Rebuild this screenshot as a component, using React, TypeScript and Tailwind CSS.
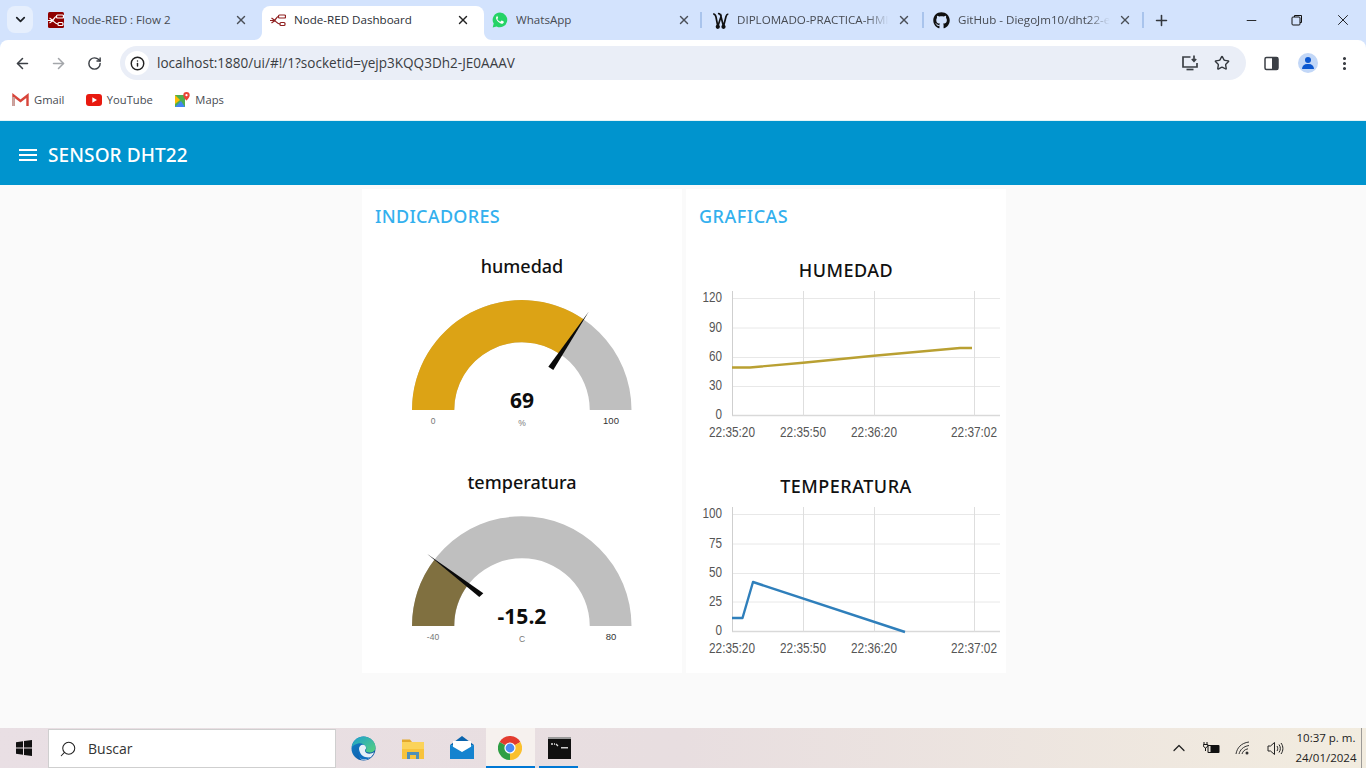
import { ArrowLeft, ArrowRight, RotateCw, X, Plus, Minus, Star, ChevronDown, ChevronUp, Search, EllipsisVertical, Info } from "lucide-react";
import { FaGithub } from "react-icons/fa";

function NodeRedGlyph({ color }: { color: string }) {
  return (
    <g fill="none" stroke={color} strokeWidth="1.200">
      <path d="M0 8.500h3.500M1.500 6l3.500 2.500L1.500 11M3.500 8.500c3 0 2.500-4 5-4M3.500 8.500c3 0 3 3.500 6.500 3.500" />
      <rect x="8.500" y="3" width="7" height="3" rx="1" />
      <rect x="10" y="10.500" width="5" height="3" rx="1" />
    </g>
  );
}

function NodeRedIcon({ boxed }: { boxed?: boolean }) {
  return (
    <svg width="16" height="16" viewBox="0 0 16 16" className="shrink-0">
      {boxed && <rect width="16" height="16" rx="1.500" fill="#8f0000" />}
      <NodeRedGlyph color={boxed ? "#ffffff" : "#8f2020"} />
    </svg>
  );
}

function WhatsIcon() {
  return (
    <svg width="16" height="16" viewBox="0 0 16 16" className="shrink-0">
      <path d="M8 .6a7.300 7.300 0 0 0-6.300 11L.7 15.400l3.900-1A7.300 7.300 0 1 0 8 .6z" fill="#25d366" />
      <path d="M5.600 3.900c-.3 0-.8.2-1.100.7-.9 1.300-.3 3 .9 4.500 1.300 1.500 3 2.600 4.500 2.600.9 0 1.800-.7 1.900-1.500.1-.5 0-.7-.2-.8l-1.700-.8c-.2-.1-.4 0-.5.100l-.7.900c-.1.100-.3.200-.5.100-1.200-.5-2.200-1.400-2.800-2.500-.1-.2 0-.3.100-.5l.5-.6c.1-.2.100-.3 0-.5l-.7-1.700c-.1-.2-.3-.3-.7-.3z" fill="#fff" />
    </svg>
  );
}

function WIcon() {
  return (
    <svg width="17" height="17" viewBox="0 0 17 17" className="shrink-0 -ml-[1px]" fill="none" stroke="#111" strokeWidth="1.700">
      <path d="M1.200 2.200C3 1.800 3.500 3 4 5l1.800 9.500L9 4.500l2.500 10L14 4.500c.3-1.200 1-2.300 2.300-2.500" />
      <path d="M6 1.800c1.500-.4 2.500.5 3 2.700" />
      <circle cx="5.800" cy="14.800" r="1.300" fill="#111" />
      <circle cx="11.500" cy="14.800" r="1.300" fill="#111" />
    </svg>
  );
}

function TabClose({ active }: { active?: boolean }) {
  return <X size={14} strokeWidth={2.400} className={active ? "text-[#222] shrink-0" : "text-[#4a4f57] shrink-0"} />;
}

function Tab({ w, icon, title, active, fade, sep }: { w: string; icon: React.ReactNode; title: string; active?: boolean; fade?: boolean; sep?: string }) {
  return (
    <div className={`${w} shrink-0 h-[34px] mt-[6px] pb-[6px] relative flex items-center pl-2 pr-[14px] gap-2 rounded-t-lg ${active ? "bg-white" : ""}`}>
      {active && (
        <svg width="8" height="8" viewBox="0 0 8 8" className="absolute -left-2 bottom-0"><path d="M8 0v8H0c4.500 0 8-3.500 8-8z" fill="#fff" /></svg>
      )}
      {active && (
        <svg width="8" height="8" viewBox="0 0 8 8" className="absolute -right-2 bottom-0"><path d="M0 0v8h8C3.500 8 0 4.500 0 0z" fill="#fff" /></svg>
      )}
      {icon}
      <div className={`flex-1 min-w-0 overflow-hidden whitespace-nowrap text-[11.600px] leading-4 ${active ? "text-[#2b2f36]" : "text-[#474b52]"} ${fade ? "[mask-image:linear-gradient(to_right,black_85%,transparent)]" : ""}`}>{title}</div>
      <TabClose active={active} />
      {sep && <div className={`absolute ${sep} top-[6px] h-[16px] w-[2px] bg-[#a9c4ec]`} />}
    </div>
  );
}

function Gauge({ label, value, min, max, unit, fill, fillPath, grayPath, needle }: { label: string; value: string; min: string; max: string; unit: string; fill: string; fillPath: string; grayPath: string; needle: string }) {
  return (
    <div className="w-[320px]">
      <div className="h-8 leading-8 text-center text-[18px] font-medium font-['Noto_Sans',sans-serif] text-[#111]">{label}</div>
      <svg width="320" height="168" viewBox="0 0 320 168" className="block">
        <path d={grayPath} fill="#bfbfbf" />
        <path d={fillPath} fill={fill} />
        <path d={needle} fill="#0a0a0a" />
        <text x="160" y="126" textAnchor="middle" fontSize="21" fontWeight="700" fill="#0d0d0d">{value}</text>
        <g className="font-['Liberation_Sans',sans-serif]">
          <text x="71" y="142" textAnchor="middle" fontSize="8.500" fill="#777">{min}</text>
          <text x="249" y="141.500" textAnchor="middle" fontSize="9.500" fill="#333">{max}</text>
          <text x="160" y="144" textAnchor="middle" fontSize="8.500" fill="#777">{unit}</text>
        </g>
      </svg>
    </div>
  );
}

function Chart({ title, ticks, line, color }: { title: string; ticks: { y: number; t: string }[]; line: string; color: string }) {
  const bottom = ticks[ticks.length - 1].y;
  const xs: [number, string][] = [[46, "22:35:20"], [117, "22:35:50"], [188, "22:36:20"], [288, "22:37:02"]];
  return (
    <div className="w-[320px]">
      <div className="h-8 leading-8 text-center text-[18px] tracking-[0.5px] font-medium font-['Noto_Sans',sans-serif] text-[#111]">{title}</div>
      <svg width="320" height="164" viewBox="0 0 320 164" className="block">
        {ticks.map((k, i) => (
          <line key={k.t} x1="46" x2="314" y1={k.y} y2={k.y} stroke={i === ticks.length - 1 ? "#d9d9d9" : "#e8e8e8"} strokeWidth={i === ticks.length - 1 ? 1.500 : 1} />
        ))}
        {xs.map(([x], i) => (
          <line key={x} x1={x + 0.5} x2={x + 0.5} y1="5" y2={bottom} stroke={i === 0 ? "#cfcfcf" : "#dedede"} />
        ))}
        <path d={line} fill="none" stroke={color} strokeWidth="2.400" strokeLinejoin="round" />
        <g className="font-['Liberation_Sans',sans-serif]" fill="#555">
          {ticks.map((k) => (
            <text key={k.t} x="36" y={k.y + 3.500} textAnchor="end" fontSize="15" textLength={k.t.length * 6.500} lengthAdjust="spacingAndGlyphs">{k.t}</text>
          ))}
          {xs.map(([x, t]) => (
            <text key={t} x={x} y={bottom + 21.500} textAnchor="middle" fontSize="15" textLength="46" lengthAdjust="spacingAndGlyphs">{t}</text>
          ))}
        </g>
      </svg>
    </div>
  );
}

function Bookmark({ icon, label }: { icon: React.ReactNode; label: string }) {
  return (
    <div className="flex items-center gap-[5px] text-[11.200px] text-[#474b52]">
      {icon}
      <span>{label}</span>
    </div>
  );
}

function TaskIcon({ children, active, open }: { children: React.ReactNode; active?: boolean; open?: boolean }) {
  return (
    <div className={`w-[49px] h-10 relative flex items-center justify-center ${active ? "bg-[#f6f1ee]" : ""}`}>
      {children}
      {open && <div className={`absolute bottom-0 h-[2px] bg-[#0078d4] ${active ? "left-0 right-0" : "left-[4px] right-[6px]"}`} />}
    </div>
  );
}

const ARC_GRAY = "M50 128A109.750 109.750 0 0 1 269.500 128H227.750A67.750 67.750 0 0 0 92.250 128Z";

export default function App() {
  return (
    <div className="w-[1366px] h-[768px] overflow-hidden flex flex-col bg-[#fafafa] font-['Open_Sans',sans-serif]">
      {/* tab strip */}
      <div className="h-10 shrink-0 bg-[#d3e3fd] flex items-start">
        <div className="ml-[7px] mr-[7px] mt-[6px] w-[26px] h-[27px] rounded-lg bg-[#e6effd] flex items-center justify-center">
          <ChevronDown size={15} strokeWidth={2.800} className="text-[#1f2328]" />
        </div>
        <Tab w="w-[222px]" icon={<NodeRedIcon boxed />} title="Node-RED : Flow 2" />
        <Tab w="w-[222px]" icon={<NodeRedIcon />} title="Node-RED Dashboard" active />
        <Tab w="w-[221px]" icon={<WhatsIcon />} title="WhatsApp" sep="right-[3px]" />
        <Tab w="w-[220px]" icon={<WIcon />} title="DIPLOMADO-PRACTICA-HMI" fade sep="right-[1px]" />
        <Tab w="w-[221px]" icon={<FaGithub size={17} className="text-[#111] shrink-0" />} title="GitHub - DiegoJm10/dht22-esp32" fade sep="right-[2px]" />
        <div className="w-8 h-8 mt-[4px] -ml-[1px] flex items-center justify-center">
          <Plus size={17} strokeWidth={2.200} className="text-[#33373d]" />
        </div>
        <div className="ml-auto flex h-10">
          <div className="w-[46px] flex items-center justify-center"><Minus size={15} strokeWidth={1.400} className="text-[#111]" /></div>
          <div className="w-[46px] flex items-center justify-center">
            <svg width="12" height="12" viewBox="0 0 12 12" fill="none" stroke="#111"><rect x="1" y="3" width="8" height="8" rx="1" /><path d="M3.500 3V1.500h7v7H9" /></svg>
          </div>
          <div className="w-[46px] flex items-center justify-center"><X size={18} strokeWidth={1.200} className="text-[#111]" /></div>
        </div>
      </div>

      {/* toolbar */}
      <div className="bg-[#d3e3fd] shrink-0">
        <div className="h-10 bg-white rounded-t-lg flex items-end pl-[4px] pr-[4px]">
          <div className="h-10 pt-[6px] w-9 flex items-center justify-center"><ArrowLeft size={17} strokeWidth={2.200} className="text-[#3b3f45]" /></div>
          <div className="h-10 pt-[6px] w-9 flex items-center justify-center"><ArrowRight size={17} strokeWidth={2.200} className="text-[#a3a6aa]" /></div>
          <div className="h-10 pt-[6px] w-9 flex items-center justify-center"><RotateCw size={15} strokeWidth={2.300} className="text-[#3b3f45]" /></div>
          <div className="ml-[8px] w-[1126px] h-[34px] rounded-full bg-[#eaeef7] flex items-center pl-[5px] pr-[16px]">
            <div className="w-6 h-6 rounded-full bg-white flex items-center justify-center mr-2">
              <Info size={15} strokeWidth={2.300} className="text-[#222]" />
            </div>
            <span className="text-[13.560px] text-[#3a3d42]">localhost:1880/ui/#!/1?socketid=yejp3KQQ3Dh2-JE0AAAV</span>
            <div className="ml-auto flex items-center gap-[15px]">
              <svg width="18" height="18" viewBox="0 0 18 18" fill="none" stroke="#3b3f45" strokeWidth="1.700">
                <path d="M9.500 3H2v10h14V9" /><path d="M13 1.500V7M10.800 5l2.200 2.200L15.200 5" /><path d="M5.500 15.500h7" />
              </svg>
              <Star size={16} strokeWidth={2.100} className="text-[#33373d]" />
            </div>
          </div>
          <div className="h-10 pt-[6px] flex items-center ml-[18px]">
            <svg width="15" height="15" viewBox="0 0 15 15"><rect x="1" y="1.500" width="13" height="12" rx="1.500" fill="none" stroke="#3b3f45" strokeWidth="1.500" /><rect x="8" y="1.500" width="6" height="12" fill="#3b3f45" /></svg>
            <div className="ml-[19px] w-5 h-5 rounded-full bg-[#c2d7f7] relative overflow-hidden">
              <div className="absolute left-[7px] top-[4px] w-[6px] h-[6px] rounded-full bg-[#0b57d0]" />
              <div className="absolute left-[4px] top-[11px] w-3 h-[5px] rounded-t-md bg-[#0b57d0]" />
            </div>
            <EllipsisVertical size={17} strokeWidth={2.400} className="ml-[18px] text-[#33373d]" />
          </div>
        </div>
      </div>

      {/* bookmarks */}
      <div className="h-[41px] shrink-0 bg-white border-b border-[#e4f4f6] flex items-center pl-[12px] gap-[21.500px]">
        <Bookmark label="Gmail" icon={
          <svg width="17" height="14" viewBox="0 0 17 14" fill="none"><path d="M1.500 13V2.500l7 5.500 7-5.500V13" stroke="#d8453a" strokeWidth="2.400" /><path d="M1.500 13V4" stroke="#c5a9a5" strokeWidth="2.400" /></svg>
        } />
        <Bookmark label="YouTube" icon={
          <svg width="16" height="12" viewBox="0 0 16 12"><rect width="16" height="12" rx="3" fill="#e8190f" /><path d="M6.300 3.300v5.400L11 6z" fill="#fff" /></svg>
        } />
        <Bookmark label="Maps" icon={
          <svg width="16" height="16" viewBox="0 0 16 16"><path d="M1 3h10v12H1z" fill="#4caf50" /><path d="M1 15l6-6 4 6z" fill="#4285f4" /><path d="M1 3l5 5-5 4z" fill="#fbbc04" /><path d="M12.500 0a3.200 3.200 0 0 0-3.200 3.200c0 2.300 3.200 5.300 3.200 5.300s3.200-3 3.200-5.300A3.200 3.200 0 0 0 12.500 0z" fill="#ea4335" /><circle cx="12.500" cy="3.200" r="1.100" fill="#fff" /></svg>
        } />
      </div>

      {/* dashboard header */}
      <div className="h-16 shrink-0 bg-[#0094ce] flex items-center pl-[19px] pt-1 gap-[11px]">
        <div className="w-[18px] flex flex-col gap-[3px]">
          <div className="h-[2px] bg-white" />
          <div className="h-[2px] bg-white" />
          <div className="h-[2px] bg-white" />
        </div>
        <span className="text-white text-[19px] tracking-[0.1px] font-medium font-['Noto_Sans',sans-serif]">SENSOR DHT22</span>
      </div>

      {/* dashboard */}
      <div className="flex-1 min-h-0 pt-1 pl-[2px] flex justify-center gap-1">
        <div className="w-[320px] h-[484px] bg-white">
          <div className="h-[61px] pl-[13px] pt-[12px] text-[18px] tracking-[0.3px] leading-[30px] font-medium font-['Noto_Sans',sans-serif] text-[#33b0ee]">INDICADORES</div>
          <div className="flex flex-col gap-4">
            <Gauge label="humedad" value="69" min="0" max="100" unit="%" fill="#dca315"
              grayPath={ARC_GRAY}
              fillPath="M50 128A109.750 109.750 0 0 1 221.600 37.200L198 72A67.750 67.750 0 0 0 92.250 128Z"
              needle="M226.700 29.700L186.300 84.700L191.300 88Z" />
            <Gauge label="temperatura" value="-15.2" min="-40" max="80" unit="C" fill="#807040"
              grayPath={ARC_GRAY}
              fillPath="M50 128A109.750 109.750 0 0 1 72.400 61.700L105.800 87A67.750 67.750 0 0 0 92.250 128Z"
              needle="M65.300 56L117.300 99L121.300 95.300Z" />
          </div>
        </div>
        <div className="w-[320px] h-[484px] bg-white">
          <div className="h-[65px] pl-[13px] pt-[12px] text-[18px] tracking-[0.5px] leading-[30px] font-medium font-['Noto_Sans',sans-serif] text-[#33b0ee]">GRAFICAS</div>
          <div className="flex flex-col gap-5">
            <Chart title="HUMEDAD" color="#b9a032"
              ticks={[{ y: 12.500, t: "120" }, { y: 42, t: "90" }, { y: 71.500, t: "60" }, { y: 100.500, t: "30" }, { y: 129.500, t: "0" }]}
              line="M46 81.500H64L117 76.700L188 69.700L274 62H286" />
            <Chart title="TEMPERATURA" color="#2f7fbb"
              ticks={[{ y: 12.500, t: "100" }, { y: 42, t: "75" }, { y: 71.500, t: "50" }, { y: 100, t: "25" }, { y: 129.500, t: "0" }]}
              line="M46 116H56.500L67 80L219 130" />
          </div>
        </div>
      </div>

      {/* taskbar */}
      <div className="h-10 shrink-0 bg-gradient-to-r from-[#e9dfe4] via-[#e8dee0] to-[#f2ecdf] flex items-center">
        <div className="w-12 h-10 flex items-center justify-center">
          <svg width="16" height="16" viewBox="0 0 16 16" fill="#111"><path d="M0 2.300L7 1.300V7.500H0zM8 1.100L16 0V7.500H8zM0 8.500H7V14.700L0 13.700zM8 8.500H16V16L8 14.900z" /></svg>
        </div>
        <div className="w-[288px] h-[39px] mt-[1px] bg-white border border-[#cfcfcf] flex items-center pl-[10px] gap-[11px]">
          <Search size={18} strokeWidth={1.400} className="-scale-x-100 text-[#222]" />
          <span className="text-[14px] text-[#333]">Buscar</span>
        </div>
        <div className="ml-[3px] flex">
          <TaskIcon>
            <svg width="25" height="25" viewBox="0 0 25 25">
              <defs>
                <linearGradient id="edgeA" x1="0" y1="0" x2="1" y2="1"><stop offset="0" stopColor="#1d9fd0" /><stop offset="1" stopColor="#58d27a" /></linearGradient>
                <linearGradient id="edgeB" x1="0" y1="0" x2="1" y2="1"><stop offset="0" stopColor="#1583c9" /><stop offset="1" stopColor="#0c4f9e" /></linearGradient>
              </defs>
              <circle cx="12.500" cy="12.500" r="12" fill="url(#edgeB)" />
              <path d="M.8 11C2 4.500 7 .5 12.500.5c6.500 0 12 5 12 11 0 3-2.500 5-6 5-3 0-4-1.200-4-2 1-.8 1-2 .5-3.500C13.500 8 10 6.500 7 7.500 4 8.500 2 9.500.8 11z" fill="url(#edgeA)" />
              <path d="M8 13c0-3 2.500-5 5-4 1.500.6 2.300 2 2 3.500-.2 1-1.200 1-1 2.500.3 2 3 3 6 2.500 1-.2 2-.6 3-1.300-1.500 4.500-6 7.800-10.500 7.800-3 0-5-3-4.500-11z" fill="#ffffff" fillOpacity="0.9" />
              <path d="M20 21c-3 2.700-8 3.300-10.500 1.500C7 20.500 7 16.500 8 13c.5 3.500 2.500 7 6 8 2 .5 4.500.5 6 0z" fill="#0f6fc0" />
            </svg>
          </TaskIcon>
          <TaskIcon>
            <svg width="22" height="21" viewBox="0 0 22 21"><path d="M0 1.500h8l2 2.500H0z" fill="#e3a92c" /><rect y="4" width="22" height="14" fill="#fbd35a" /><rect y="11" width="22" height="10" fill="#f8c33c" /><path d="M5 21v-7h12v7h-3v-4H8v4z" fill="#4f90b8" /></svg>
          </TaskIcon>
          <TaskIcon>
            <svg width="24" height="24" viewBox="0 0 24 24"><path d="M0 9L12 0l12 9v14H0z" fill="#0a64ad" /><path d="M0 9h24v14H0z" fill="#2d9ad9" /><path d="M3 5h18v9l-9 5-9-5z" fill="#fff" /><path d="M0 9l12 7 12-7v14H0z" fill="#1583cf" /></svg>
          </TaskIcon>
          <TaskIcon active open>
            <svg width="24" height="24" viewBox="0 0 24 24" className="-ml-[2px]">
              <path d="M12 12L22.400 6A12 12 0 0 0 1.600 6z" fill="#e33b2e" />
              <path d="M12 12L1.600 6A12 12 0 0 0 12 24z" fill="#2f9e44" />
              <path d="M12 12L12 24A12 12 0 0 0 22.400 6z" fill="#fbc02d" />
              <circle cx="12" cy="12" r="5.600" fill="#fff" />
              <circle cx="12" cy="12" r="4.400" fill="#4a8af4" />
            </svg>
          </TaskIcon>
          <TaskIcon open>
            <svg width="23" height="22" viewBox="0 0 23 22"><rect width="23" height="22" fill="#101010" /><rect width="23" height="2" fill="#9a9a9a" /><path d="M3 7h2M6 7h1M8 7l2 2" stroke="#ddd" strokeWidth="1.300" fill="none" /><rect x="13" y="10" width="7" height="1.500" fill="#ccc" /></svg>
          </TaskIcon>
        </div>
        <div className="ml-auto flex items-center h-10">
          <div className="w-8 flex justify-center"><ChevronUp size={20} strokeWidth={1.500} className="text-[#222]" /></div>
          <div className="w-8 flex justify-center">
            <svg width="17" height="12" viewBox="0 0 17 12"><rect x="4.500" y="3" width="12" height="8" rx="1" fill="#111" /><rect x="5.500" y="4" width="2" height="6" fill="#e9e4dc" /><path d="M1 0v2M4 0v2M.3 2.500h4.500v1.800L2.500 6 .3 4.300zM2.500 6v3" stroke="#111" fill="none" /></svg>
          </div>
          <div className="w-8 flex justify-center">
            <svg width="16" height="14" viewBox="0 0 16 14" fill="none" stroke="#333"><path d="M1 13C2 7 6 2 14 1" /><path d="M4 13C5 9 8 5.500 14 4.500" /><path d="M7 13c.8-2.600 2.600-4.600 6-5.200" /><circle cx="12" cy="12" r="1.500" fill="#333" stroke="none" /></svg>
          </div>
          <div className="w-8 flex justify-center">
            <svg width="17" height="15" viewBox="0 0 17 15" fill="none" stroke="#222"><path d="M1 5h2.500L7.500 1.500v12L3.500 10H1z" /><path d="M10 5c1 1.500 1 3.500 0 5M12 3.500c1.800 2.500 1.800 5.500 0 8M14 2c2.500 3.300 2.500 7.700 0 11" /></svg>
          </div>
          <div className="w-[70px] text-center text-[11.500px] leading-5 text-[#222]">
            <div>10:37 p. m.</div>
            <div>24/01/2024</div>
          </div>
          <div className="w-[5px] h-10 border-l border-[#9c9a97]" />
        </div>
      </div>
    </div>
  );
}
